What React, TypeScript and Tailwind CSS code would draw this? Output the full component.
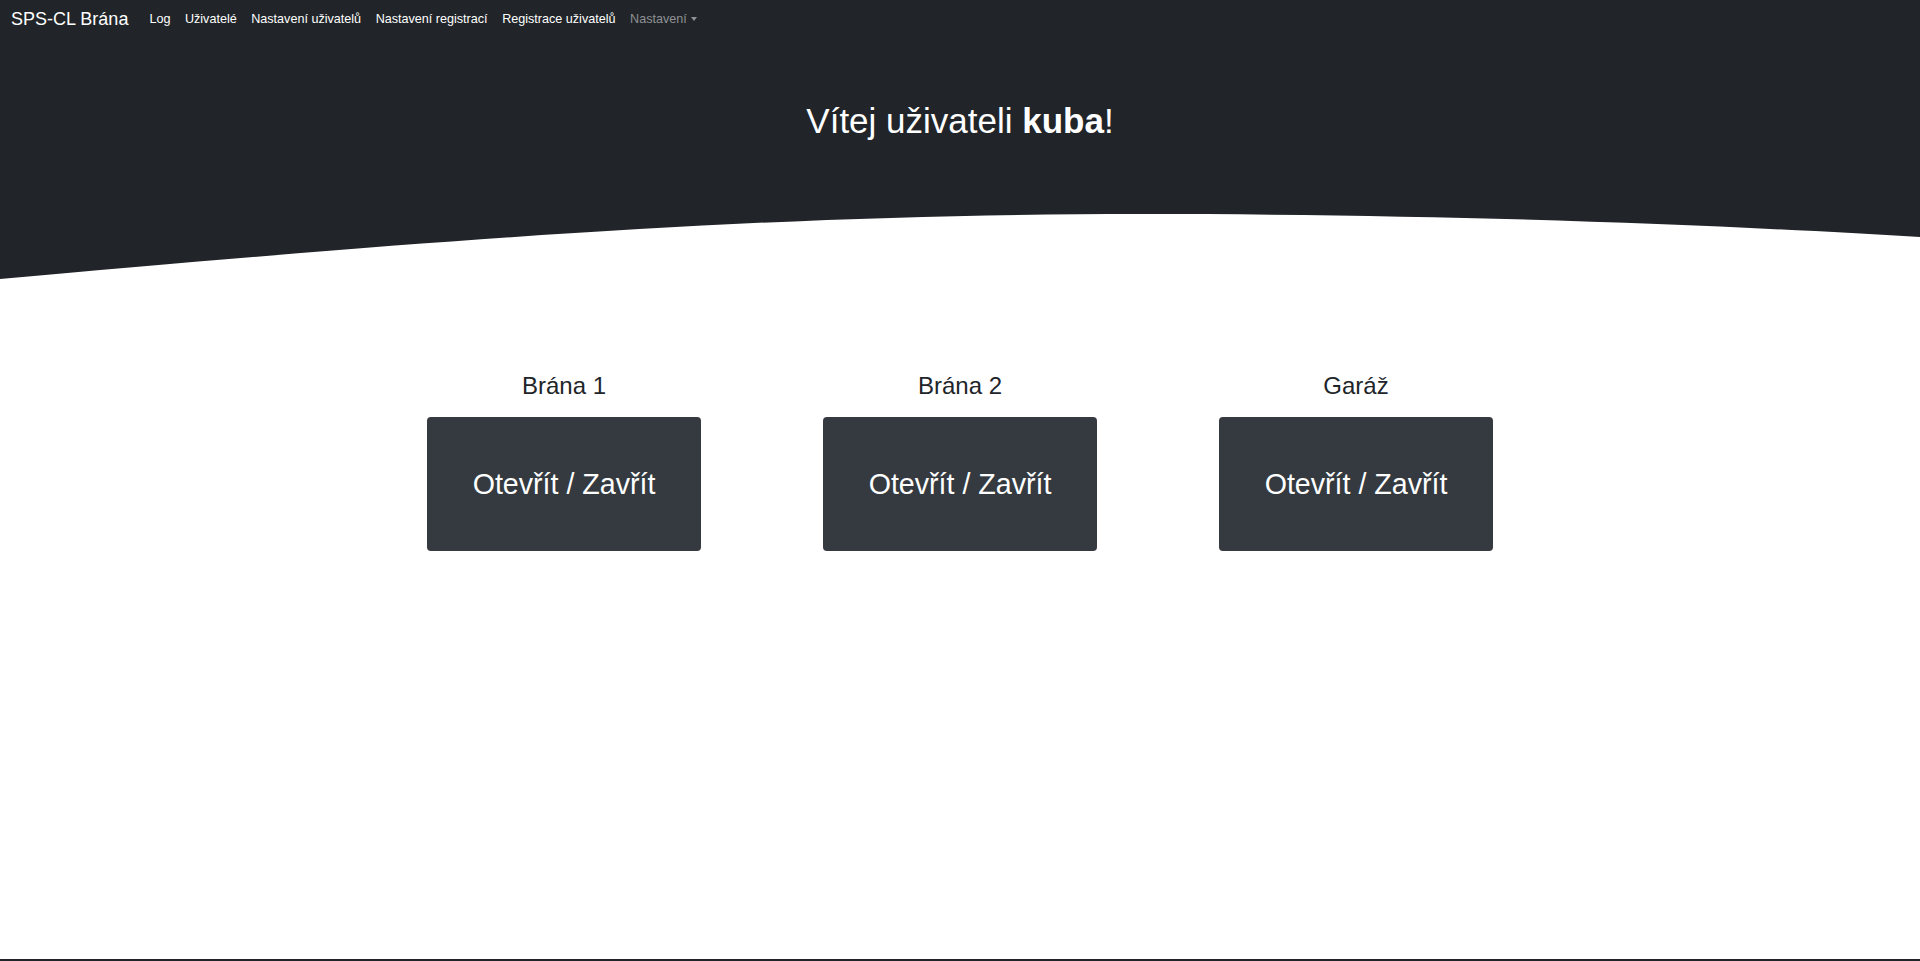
import React from "react";

const links = ["Log", "Uživatelé", "Nastavení uživatelů", "Nastavení registrací", "Registrace uživatelů"];
const gates = ["Brána 1", "Brána 2", "Garáž"];

export default function App() {
    return (
        <div className="font-['Liberation_Sans',Arial,sans-serif] bg-white">
            <div className="min-h-[959px]">
                {/* Header */}
                <div className="bg-[#212529]">
                    <nav className="h-[38px] flex items-center pl-[11px]">
                        <span className="text-white text-[18px] leading-none mr-[21px]">SPS-CL Brána</span>
                        <div className="flex items-center gap-[14.5px] text-[12.6px] leading-none">
                            {links.map((l) => (
                                <a key={l} className="text-white">{l}</a>
                            ))}
                            <a className="text-[#8f9194] flex items-center">
                                Nastavení
                                <span className="inline-block ml-[4px] border-x-[3.5px] border-x-transparent border-t-[4px] border-t-[#8f9194]" />
                            </a>
                        </div>
                    </nav>
                    <div className="h-[172px] pt-[62px] text-center">
                        <h1 className="text-white text-[35px] leading-[42px]">
                            Vítej uživateli <b>kuba</b>!
                        </h1>
                    </div>
                </div>

                {/* Wave */}
                <svg className="block w-full h-[70px]" viewBox="0 210 1920 70" preserveAspectRatio="none">
                    <path
                        d="M0 210 L0 279 C500 234 800 214 1140 214 C1450 214 1720 225 1920 237 L1920 210 Z"
                        fill="#212529"
                    />
                </svg>

                {/* Gates */}
                <div className="w-[1188px] mx-auto mt-[91px] grid grid-cols-3">
                    {gates.map((g) => (
                        <div key={g} className="flex flex-col items-center">
                            <h4 className="text-[#212529] text-[24px] leading-[29px]">{g}</h4>
                            <button className="mt-[17px] w-[274px] h-[134px] rounded-[4px] bg-[#343a40] text-white text-[28.6px]">
                                Otevřít / Zavřít
                            </button>
                        </div>
                    ))}
                </div>
            </div>

            <footer className="h-[60px] bg-[#212529]" />
        </div>
    );
}
